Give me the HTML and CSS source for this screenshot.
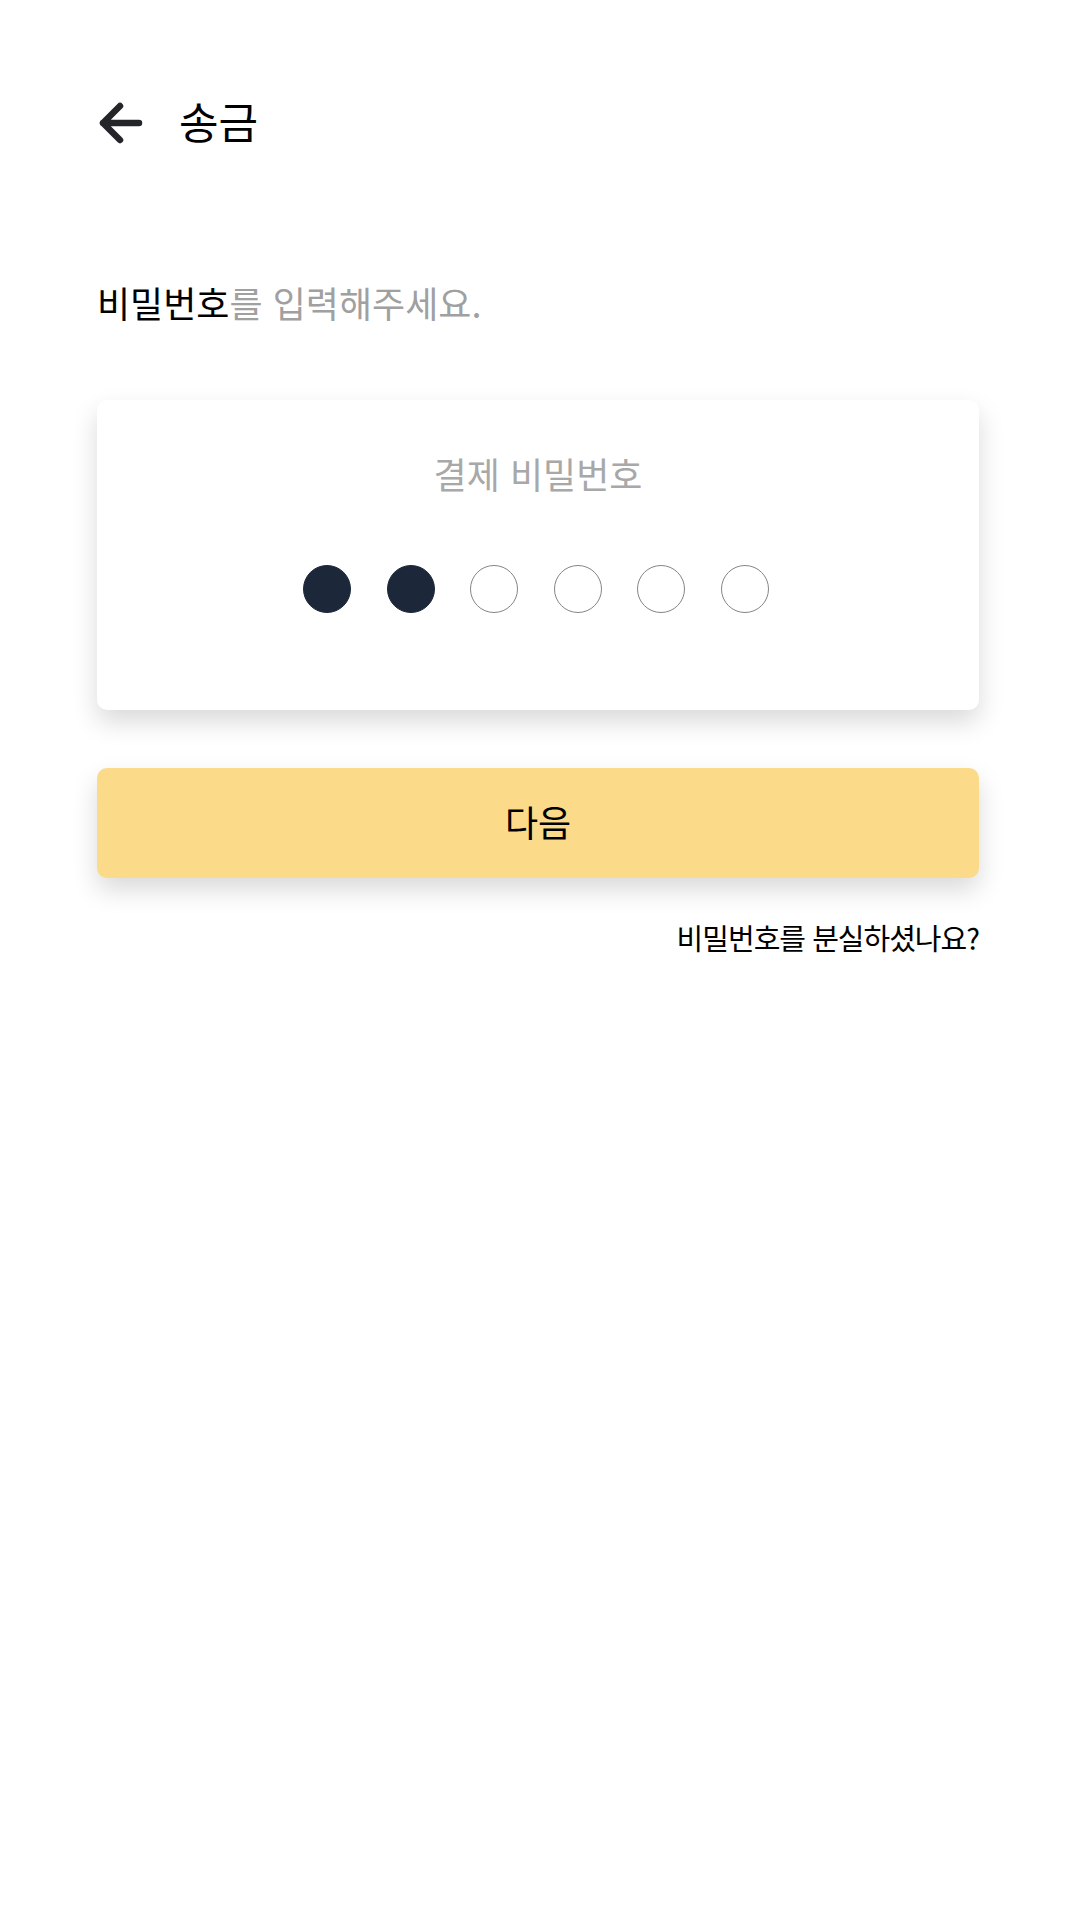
FILE: index.html
```html
<!DOCTYPE html>
<html lang="ko">
<head>
<meta charset="utf-8">
<title>송금</title>
<link rel="stylesheet" href="styles.css">
</head>
<body>
<div class="page">
  <header class="header">
    <button class="back" aria-label="뒤로">
      <svg width="48" height="48" viewBox="0 0 48 48">
        <path d="M42 24 H6 M23 7 L6 24 L23 41" fill="none" stroke="#232529" stroke-width="6.5" stroke-linecap="round" stroke-linejoin="round"/>
      </svg>
    </button>
    <h1 class="header-title">송금</h1>
  </header>

  <p class="prompt"><span class="prompt-strong">비밀번호</span>를 입력해주세요.</p>

  <section class="card">
    <div class="card-title">결제 비밀번호</div>
    <div class="dots">
      <span class="dot filled"></span>
      <span class="dot filled"></span>
      <span class="dot"></span>
      <span class="dot"></span>
      <span class="dot"></span>
      <span class="dot"></span>
    </div>
  </section>

  <button class="next">다음</button>

  <div class="lost"><a class="lost-link">비밀번호를 분실하셨나요?</a></div>
</div>
</body>
</html>
```

FILE: styles.css
```css
html, body {
  margin: 0;
  padding: 0;
  background: #ffffff;
}

body {
  font-family: "Noto Sans CJK KR", "Noto Sans", sans-serif;
  color: #000;
}

.page {
  width: 1080px;
  min-height: 1920px;
  box-sizing: border-box;
  padding: 99px 101px 0 97px;
  display: flex;
  flex-direction: column;
}

.header {
  display: flex;
  align-items: center;
  height: 48px;
}

.back {
  width: 48px;
  height: 48px;
  padding: 0;
  border: 0;
  background: none;
  display: flex;
}

.header-title {
  margin: 0 0 0 34px;
  padding-bottom: 5px;
  font-size: 43px;
  font-weight: 400;
  line-height: 43px;
  color: #000;
}

.prompt {
  margin: 131px 0 0 0;
  font-size: 36px;
  line-height: 48px;
  color: #a0a0a0;
}

.prompt-strong {
  color: #000;
}

.card {
  margin-top: 74px;
  background: #fff;
  border-radius: 10px;
  box-shadow: 0 12px 26px rgba(0, 0, 0, 0.15);
  padding: 51px 0 97px;
  display: flex;
  flex-direction: column;
  align-items: center;
}

.card-title {
  font-size: 36px;
  line-height: 44px;
  color: #a8a8a8;
}

.dots {
  margin-top: 70px;
  padding-right: 4px;
  display: flex;
  gap: 35.5px;
}

.dot {
  width: 48px;
  height: 48px;
  box-sizing: border-box;
  border-radius: 50%;
  border: 1px solid #858585;
  background: #fff;
}

.dot.filled {
  background: #1c2839;
  border-color: #1c2839;
}

.next {
  margin-top: 58px;
  height: 110px;
  border: 0;
  border-radius: 10px;
  background: #fbda8a;
  box-shadow: 0 12px 26px rgba(0, 0, 0, 0.15);
  font-family: "Noto Sans CJK KR", "Noto Sans", sans-serif;
  font-size: 36px;
  line-height: 40px;
  color: #000;
  padding: 0 0 5px;
}

.lost {
  margin-top: 39px;
  display: flex;
  justify-content: flex-end;
}

.lost-link {
  font-size: 29px;
  line-height: 40px;
  letter-spacing: -1px;
  color: #000;
}
```
